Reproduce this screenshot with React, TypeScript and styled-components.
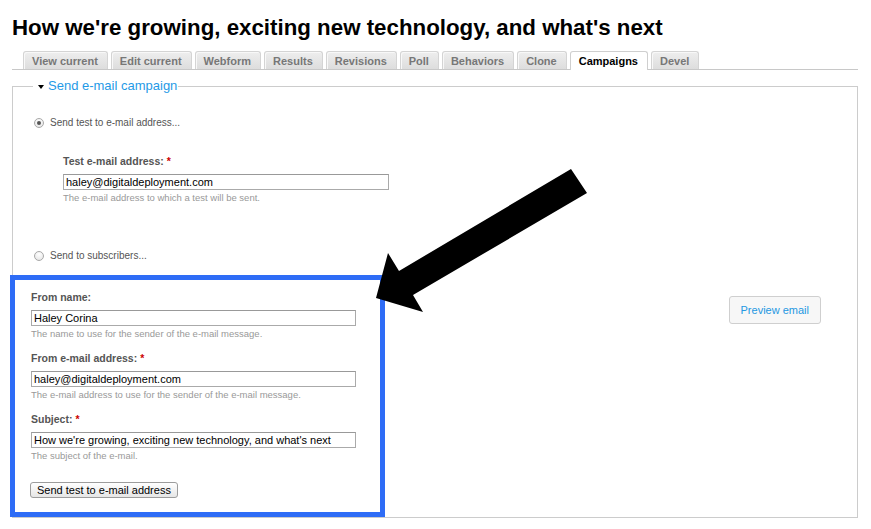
import React from "react";
import styled, { createGlobalStyle, css } from "styled-components";

const GlobalStyle = createGlobalStyle`
  html, body { margin: 0; padding: 0; background: #fff; }
  body { font-family: "Liberation Sans", Arial, Helvetica, sans-serif; color: #333; }
  * { box-sizing: border-box; }
`;

const Page = styled.div`
  position: relative;
  width: 871px;
  height: 529px;
  overflow: hidden;
  padding-top: 15px;
`;

const Title = styled.h1`
  margin: 0 0 0 12px;
  font-size: 22.3px;
  line-height: 26px;
  font-weight: bold;
  color: #000;
`;

const TabList = styled.ul`
  display: flex;
  gap: 3px;
  list-style: none;
  margin: 10px 13px 0 12px;
  padding: 0 0 0 11px;
  border-bottom: 1px solid #c8c8c8;
  height: 19px;
`;

const Tab = styled.li<{ $active?: boolean }>`
  height: 18px;
  padding: 2px 9px 0 8px;
  line-height: 15px;
  font-size: 11px;
  font-weight: bold;
  color: #777;
  border: 1px solid #d4d4d4;
  border-bottom: none;
  border-radius: 3px 3px 0 0;
  background: linear-gradient(#eeeeee, #dddddd);
  box-shadow: inset 1px 1px 0 #f8f8f8;
  white-space: nowrap;
  ${(p) =>
    p.$active &&
    css`
      height: 19px;
      color: #000;
      background: #fff;
      border-color: #cfcfcf;
      box-shadow: none;
    `}
`;

const Fieldset = styled.fieldset`
  margin: 8px 13px 0 12px;
  padding: 0;
  border: 1px solid #cccccc;
  min-width: 0;
`;

const Legend = styled.legend`
  margin-left: 20px;
  padding: 0 1px 0 5px;
  font-size: 13px;
  line-height: 16px;
  color: #1f9ae6;
  display: flex;
  align-items: center;
  gap: 4px;
`;

const Caret = styled.span`
  width: 0;
  height: 0;
  border-left: 3px solid transparent;
  border-right: 3px solid transparent;
  border-top: 4px solid #000;
  margin-top: 1px;
`;

const Body = styled.div`
  padding: 22px 0 0 20px;
`;

const RadioRow = styled.div<{ $gap?: number }>`
  display: flex;
  align-items: center;
  gap: 6px;
  height: 14px;
  margin-top: ${(p) => p.$gap ?? 0}px;
`;

const Radio = styled.span<{ $checked?: boolean }>`
  width: 10px;
  height: 10px;
  margin-left: 1px;
  border-radius: 50%;
  border: 1px solid #a8a8a8;
  background: radial-gradient(circle at 50% 30%, #ffffff, #e2e2e2);
  display: flex;
  align-items: center;
  justify-content: center;
  &::after {
    content: "";
    display: ${(p) => (p.$checked ? "block" : "none")};
    width: 4px;
    height: 4px;
    border-radius: 50%;
    background: #555;
  }
`;

const RadioLabel = styled.span`
  font-size: 10px;
  line-height: 14px;
  color: #555;
`;

const Indent = styled.div`
  margin: 24px 0 0 30px;
`;

const FormItem = styled.div<{ $last?: boolean }>`
  display: flex;
  flex-direction: column;
  align-items: flex-start;
  margin-bottom: ${(p) => (p.$last ? 0 : 10)}px;
`;

const Label = styled.label`
  font-size: 10.5px;
  line-height: 14px;
  font-weight: bold;
  color: #555;
  margin-bottom: 6px;
`;

const Required = styled.span`
  color: #cc0000;
  margin-left: 3px;
`;

const TextInput = styled.input<{ $width: number }>`
  width: ${(p) => p.$width}px;
  height: 16px;
  margin: 0;
  padding: 0 2px;
  border: 1px solid #aaaaaa;
  border-top-color: #999;
  font-family: "Liberation Sans", Arial, sans-serif;
  font-size: 11px;
  color: #000;
  background: #fff;
  outline: none;
`;

const Description = styled.div`
  font-size: 9.5px;
  line-height: 14px;
  color: #999;
  margin-top: 1px;
`;

const Row = styled.div`
  display: flex;
  align-items: flex-start;
  margin-top: 12px;
`;

const Highlight = styled.div`
  width: 375px;
  margin-left: -23px;
  border: 5px solid #2e6cf6;
  background: #fff;
  padding: 10px 24px 14px 16px;
  position: relative;
`;

const SubmitButton = styled.button`
  margin: 19px 0 0 -1px;
  height: 16px;
  padding: 0 6px;
  border: 1px solid #9c9c9c;
  border-radius: 3px;
  background: linear-gradient(#ffffff, #e6e6e6);
  font-family: "Liberation Sans", Arial, sans-serif;
  font-size: 11px;
  line-height: 14px;
  color: #000;
`;

const PreviewButton = styled.button`
  margin: 21px 36px 0 auto;
  height: 28px;
  padding: 0 11px;
  border: 1px solid #cfcfcf;
  border-radius: 3px;
  background: #f7f7f7;
  font-family: "Liberation Sans", Arial, sans-serif;
  font-size: 11px;
  color: #2597e2;
`;

const ArrowSvg = styled.svg`
  position: absolute;
  left: 370px;
  top: 160px;
  pointer-events: none;
`;

const tabs = [
  "View current",
  "Edit current",
  "Webform",
  "Results",
  "Revisions",
  "Poll",
  "Behaviors",
  "Clone",
  "Campaigns",
  "Devel",
];

export default function App() {
  return (
    <>
      <GlobalStyle />
      <Page>
        <Title>How we're growing, exciting new technology, and what's next</Title>
        <TabList>
          {tabs.map((t) => (
            <Tab key={t} $active={t === "Campaigns"}>
              {t}
            </Tab>
          ))}
        </TabList>
        <Fieldset>
          <Legend>
            <Caret />
            Send e-mail campaign
          </Legend>
          <Body>
            <RadioRow>
              <Radio $checked />
              <RadioLabel>Send test to e-mail address...</RadioLabel>
            </RadioRow>
            <Indent>
              <FormItem $last>
                <Label>
                  Test e-mail address:<Required>*</Required>
                </Label>
                <TextInput $width={326} defaultValue="haley@digitaldeployment.com" />
                <Description>The e-mail address to which a test will be sent.</Description>
              </FormItem>
            </Indent>
            <RadioRow $gap={44}>
              <Radio />
              <RadioLabel>Send to subscribers...</RadioLabel>
            </RadioRow>
            <Row>
              <Highlight>
                <FormItem>
                  <Label>From name:</Label>
                  <TextInput $width={325} defaultValue="Haley Corina" />
                  <Description>The name to use for the sender of the e-mail message.</Description>
                </FormItem>
                <FormItem>
                  <Label>
                    From e-mail address:<Required>*</Required>
                  </Label>
                  <TextInput $width={325} defaultValue="haley@digitaldeployment.com" />
                  <Description>The e-mail address to use for the sender of the e-mail message.</Description>
                </FormItem>
                <FormItem $last>
                  <Label>
                    Subject:<Required>*</Required>
                  </Label>
                  <TextInput
                    $width={325}
                    defaultValue="How we're growing, exciting new technology, and what's next"
                  />
                  <Description>The subject of the e-mail.</Description>
                </FormItem>
                <SubmitButton>Send test to e-mail address</SubmitButton>
              </Highlight>
              <PreviewButton>Preview email</PreviewButton>
            </Row>
          </Body>
        </Fieldset>
        <ArrowSvg width="230" height="160" viewBox="0 0 230 160">
          <polygon
            points="201,9 217,33 43,135 53,152 6,138 18,93 29,111"
            fill="#000"
          />
        </ArrowSvg>
      </Page>
    </>
  );
}
